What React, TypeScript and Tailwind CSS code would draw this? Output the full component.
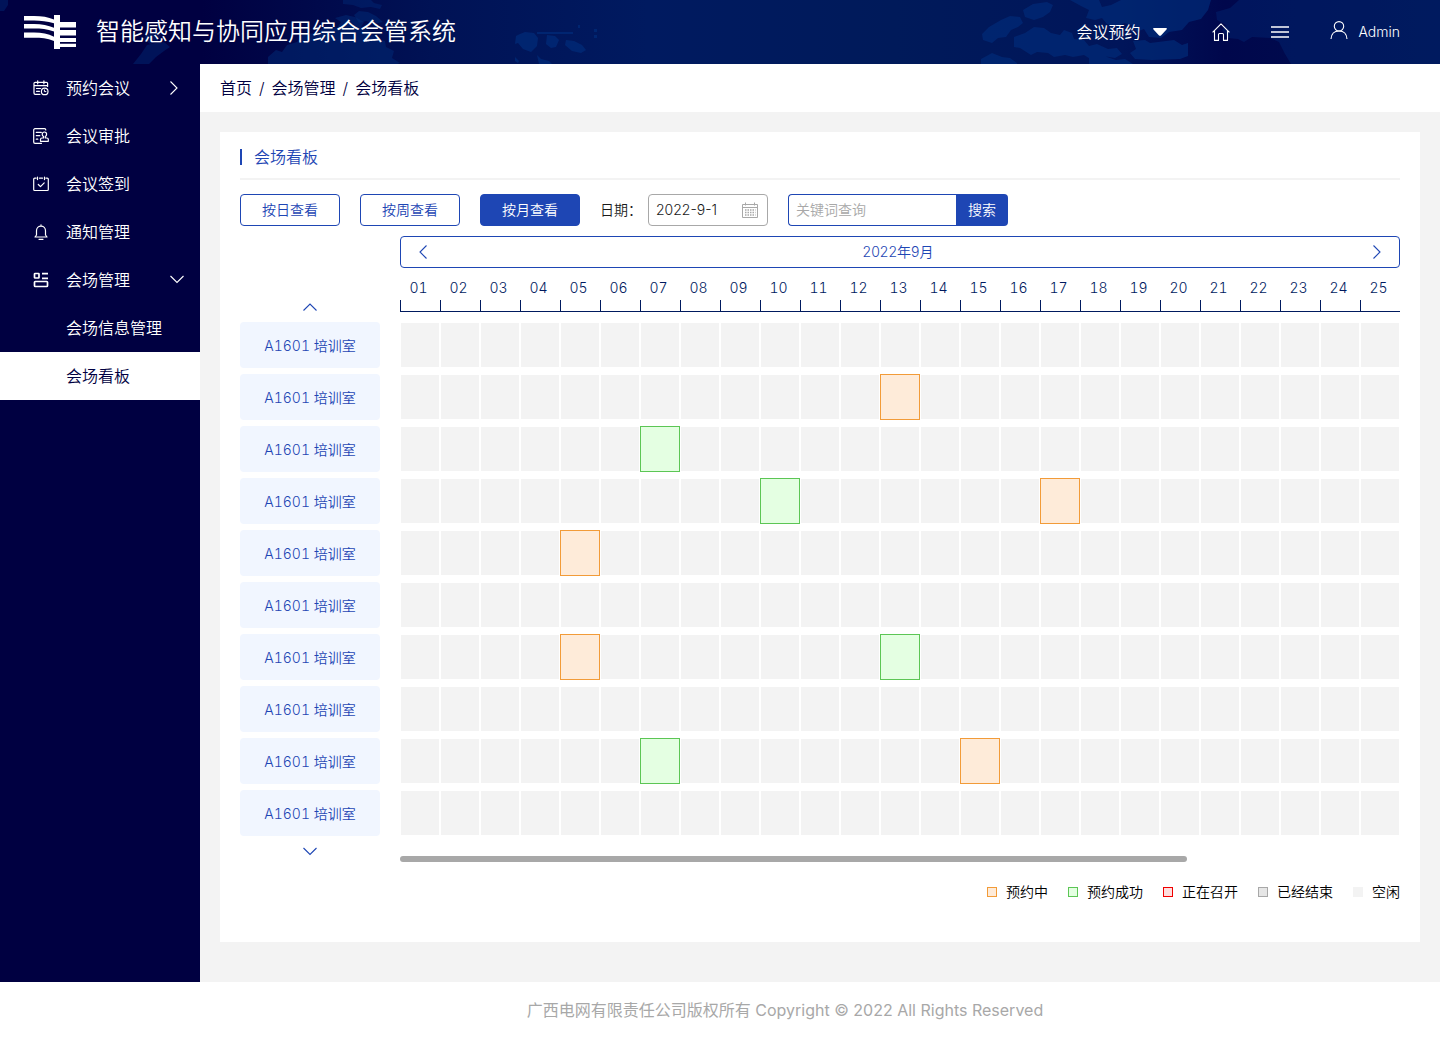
import { useState, type ReactNode } from 'react';

type Status = 'pending' | 'booked' | 'running' | 'ended' | 'free';

interface Room {
    id: number;
    name: string;
    bookings: Record<number, Status>;
}

const ROOMS: Room[] = [
    { id: 1, name: 'A1601 培训室', bookings: {} },
    { id: 2, name: 'A1601 培训室', bookings: { 13: 'pending' } },
    { id: 3, name: 'A1601 培训室', bookings: { 7: 'booked' } },
    { id: 4, name: 'A1601 培训室', bookings: { 10: 'booked', 17: 'pending' } },
    { id: 5, name: 'A1601 培训室', bookings: { 5: 'pending' } },
    { id: 6, name: 'A1601 培训室', bookings: {} },
    { id: 7, name: 'A1601 培训室', bookings: { 5: 'pending', 13: 'booked' } },
    { id: 8, name: 'A1601 培训室', bookings: {} },
    { id: 9, name: 'A1601 培训室', bookings: { 7: 'booked', 15: 'pending' } },
    { id: 10, name: 'A1601 培训室', bookings: {} },
];

const DAYS = Array.from({ length: 25 }, (_, i) => i + 1);

const CELL_STYLE: Record<Status, string> = {
    pending: 'border-[#f29b38] bg-[#feebd9]',
    booked: 'border-[#5cc655] bg-[#e4ffe2]',
    running: 'border-[#f00000] bg-[#ffdede]',
    ended: 'border-[#a8a8a8] bg-[#e6e6e6]',
    free: 'border-white bg-[#f3f3f3]',
};

const LEGEND: { status: Status; label: string }[] = [
    { status: 'pending', label: '预约中' },
    { status: 'booked', label: '预约成功' },
    { status: 'running', label: '正在召开' },
    { status: 'ended', label: '已经结束' },
    { status: 'free', label: '空闲' },
];

const VIEWS = ['按日查看', '按周查看', '按月查看'];

function Chevron({ dir }: { dir: 'left' | 'right' | 'up' | 'down' }) {
    const d = {
        left: 'M11.5 1.5 5 8l6.5 6.5',
        right: 'M4.5 1.5 11 8l-6.500 6.500',
        up: 'M1.5 11.5 8 5l6.5 6.5',
        down: 'M1.5 4 8 10.500l6.500-6.500',
    }[dir];
    return (
        <svg viewBox="0 0 16 16" className="size-4" fill="none" stroke="currentColor" strokeWidth="1.1">
            <path d={d} />
        </svg>
    );
}

function LineIcon({ children }: { children: ReactNode }) {
    return (
        <svg viewBox="0 0 16 16" className="size-4 shrink-0" fill="none" stroke="currentColor" strokeWidth="1.2" strokeLinecap="round" strokeLinejoin="round">
            {children}
        </svg>
    );
}

function BookIcon() {
    return (
        <LineIcon>
            <path d="M7 14.300H2.300A1.300 1.300 0 0 1 1 13V3.600a1.300 1.300 0 0 1 1.300-1.300h11A1.300 1.300 0 0 1 14.600 3.600V6.500M1 5.600h13.600M4.700.8v3M10.900.8v3M3.500 8.500h4M3.500 11.300h3" />
            <circle cx="11.700" cy="11.400" r="3.300" />
            <path d="M11.400 9.900v1.700h1.500" strokeWidth="1" />
        </LineIcon>
    );
}

function ApproveIcon() {
    return (
        <LineIcon>
            <path d="M8.500 15.300H2A1.300 1.300 0 0 1 .7 14V2A1.300 1.300 0 0 1 2 .7h9.500A1.300 1.300 0 0 1 12.800 2M3.300 4.400h5M3.300 7.700h3.500M3.300 11.200h1.500" />
            <path d="M10.500 10V8.600C9.600 8 9.200 7.200 9.200 6.200a2.200 2.200 0 0 1 4.400 0c0 1-.4 1.800-1.300 2.400V10h1.500a1.500 1.500 0 0 1 1.500 1.500v1.800H7.500v-1.800A1.500 1.500 0 0 1 9 10z" />
        </LineIcon>
    );
}

function SignIcon() {
    return (
        <LineIcon>
            <path d="M3 2.200H1.700a1 1 0 0 0-1 1V13.500a1 1 0 0 0 1 1h12.600a1 1 0 0 0 1-1V3.200a1 1 0 0 0-1-1H13M6.500 2.200h3M4.500 1v2.600M11.500 1v2.600M5.300 8.500l2.200 2.200 3.700-3.800" />
        </LineIcon>
    );
}

function BellIcon() {
    return (
        <LineIcon>
            <path d="M8 .8v1.300M3.500 11V6.700a4.500 4.500 0 0 1 9 0V11l1.500 2H2zM6 15.300h4" />
        </LineIcon>
    );
}

function VenueIcon() {
    return (
        <svg viewBox="0 0 16 16" className="size-4 shrink-0" fill="none" stroke="currentColor" strokeWidth="1.700">
            <rect x="1.500" y="1.500" width="4.500" height="4.500" rx=".6" />
            <rect x="1.500" y="9.500" width="13" height="5" rx=".8" />
            <path d="M9 1.700h6M9 6.300h6" />
        </svg>
    );
}

function Logo() {
    return (
        <svg viewBox="0 0 52 34" className="h-[34px] w-[52px]" fill="currentColor">
            <path d="M0 1h10c8 0 14 1 20 3.500v3.700C23 6.300 17 5.500 10 5.500H0zM0 9h10c8 0 14 1.300 20 3.800v3.600C23 14 17 13.500 10 13.500H0zM0 17.500h10c8 0 14 1.300 20 4.200V26c-7-2.700-13-3.200-20-3.200H0z" />
            <path d="M30 0h6v7h16v5.500H36v2.600h16v5.500H36V23h16v4H36v1.800h16V32H36v2h-6z" />
        </svg>
    );
}

function HeaderMap() {
    return (
        <svg viewBox="0 0 1440 64" preserveAspectRatio="xMidYMid slice" className="absolute inset-0 size-full" fill="#002b78" aria-hidden="true">
            <path d="M0 0h8v5l-4 6H0zM343 0h28l3 3 8 2-2 4-9-2-10 1-8-3-10-1zM133 64l8-10 6-9 8-2 9-1 6 5-6 4-8 6-7 7zM146 33l8-2 7 3-3 7-8 3-6-5z" opacity=".45" />
            <path d="m268 57 8-7 6 2 5-7 10-3 5-7 12-2 14-7 9 2 4-6-6-4 11-3 9 2 9 5-3 5 9 4 5 7 10 3 1 6 8 4-2 7 8 5-8 3h-9l-4 4H268z" opacity=".5" />
            <path d="M354 15l5-4 9 1 8 4 7 6-9 2-8-3-7 2z" opacity=".5" />
            <path d="m516 36 4-2 5-2 9 1 4 5-1 8-6 6-8-3-5-6-3 1zM537 32h36v2h-36zM547 35l8 1 4 4-3 7-5 1-5-4zM566 40l8 1 8 4 4 5-5 3-9-2-7-6zM578 25h2v3h-2zM594 29h3v3h-3zM594 35h3v3h-3zM515 57l4 4-1 2-3-2zM537 55l4 4 8 2 3 3h-13z" opacity=".75" />
            <path d="m982 34 7-7 12-7 9-4 10 1 3 6-5 4-7 3-5 7-8 1-6 5-9-3zM1023 10l10-6 14-2 6 3-3 7-7 5-9 3-9-3zM1070 0h29l3 7 9-2 10-5h90l-3 10-7 9-12 3-7 8-13 2-8 6-12-1-5-8-8 3-4-7-8-2-6 4-11-3-5-6-7 2-9-2 3-8-8-4zM1014 37l11-4 9-6 10 1 7 5 9 2 4-5 8 3 2 6 10 1 5 6 8-2 11 5 9-1 5 6-7 4-12-2-11 4-8-5-11 2-8-2-11 2-6-4-11-1-6 3-11-7-6-1zM1133 41l12-1 5 3 24-3 8 5 6-2v13l-8 3-28 1-17-1-5-6 6-4zM981 59l11-6 10 4 8 1 7 5v1h-36zM1089 53l8-1 10 5 9 3 9-1 8 5h-44z" opacity=".7" />
            <path d="m1216 12 14-4 9-8h201v64h-149l-6-10-6-12-9-4-18-1-8 5-6-3-10-1-6-8 4-5-9-5z" opacity=".4" />
        </svg>
    );
}

function Header() {
    return (
        <header className="relative h-16 bg-[linear-gradient(90deg,#000041_0%,#000041_14%,#001255_30%,#001a60_45%,#001a5a_62%,#00155a_78%,#00074c_85%,#00104f_100%)] text-white">
            <HeaderMap />
            <div className="relative flex h-full items-center pl-6 pr-10">
                <Logo />
                <h1 className="ml-5 text-2xl font-[350]">智能感知与协同应用综合会管系统</h1>
                <button type="button" className="ml-auto flex items-center gap-3 text-base">
                    会议预约
                    <svg viewBox="0 0 16 16" className="size-4" fill="currentColor">
                        <path d="M1.800 4h12.400q1.200.2.500 1.200l-5.500 6q-1.200 1.100-2.400 0l-5.500-6q-.7-1 .5-1.200z" />
                    </svg>
                </button>
                <button type="button" aria-label="首页" className="ml-11">
                    <svg viewBox="0 0 18 18" className="size-[18px]" fill="none" stroke="currentColor" strokeWidth="1.100" strokeLinejoin="round">
                        <path d="M.6 9.300 9 .8l8.400 8.500M2.500 7.800v9.600h4V11.500a1 1 0 0 1 1-1h3a1 1 0 0 1 1 1v5.900h4V7.800" />
                    </svg>
                </button>
                <button type="button" aria-label="菜单" className="ml-10">
                    <svg viewBox="0 0 20 18" className="h-[18px] w-5" fill="none" stroke="currentColor" strokeWidth="1.600">
                        <path d="M1 4h18M1 9h18M1 14h18" />
                    </svg>
                </button>
                <button type="button" className="ml-10 flex items-center gap-2.5 text-sm">
                    <svg viewBox="0 0 18 18" className="mb-1 size-[18px]" fill="none" stroke="currentColor" strokeWidth="1.100">
                        <circle cx="9" cy="5.300" r="4.700" />
                        <path d="M1 18c.3-4.500 3-8 8-8s7.700 3.500 8 8" />
                    </svg>
                    Admin
                </button>
            </div>
        </header>
    );
}

const MENU = [
    { label: '预约会议', icon: <BookIcon />, arrow: 'right' as const },
    { label: '会议审批', icon: <ApproveIcon /> },
    { label: '会议签到', icon: <SignIcon /> },
    { label: '通知管理', icon: <BellIcon /> },
    { label: '会场管理', icon: <VenueIcon />, arrow: 'down' as const },
];

function Sidebar() {
    return (
        <nav className="w-[200px] shrink-0 bg-[#000041] text-base text-white">
            {MENU.map((item) => (
                <a key={item.label} href="#" className="flex h-12 items-center gap-[17px] pl-[33px] pr-[15px]">
                    {item.icon}
                    <span>{item.label}</span>
                    {item.arrow && (
                        <span className={`ml-auto ${item.arrow === 'right' ? 'pr-[3px]' : ''}`}>
                            <Chevron dir={item.arrow} />
                        </span>
                    )}
                </a>
            ))}
            <a href="#" className="flex h-12 items-center pl-[66px]">会场信息管理</a>
            <a href="#" aria-current="page" className="flex h-12 items-center bg-white pl-[66px] text-[#000041]">会场看板</a>
        </nav>
    );
}

function Toolbar() {
    const [view, setView] = useState('按月查看');
    const [date, setDate] = useState('2022-9-1');
    const [keyword, setKeyword] = useState('');

    return (
        <div className="mt-3.5 flex items-center gap-5 text-sm">
            {VIEWS.map((v) => (
                <button
                    key={v}
                    type="button"
                    onClick={() => setView(v)}
                    className={`h-8 w-[100px] rounded border border-[#1e46b4] ${
                        v === view ? 'bg-[#1e46b4] text-white' : 'bg-white text-[#1e46b4]'
                    }`}
                >
                    {v}
                </button>
            ))}
            <div className="flex items-center">
                <label htmlFor="date" className="w-12 text-[#1a1a1a]">日期：</label>
                <div className="flex h-8 w-[120px] items-center rounded border border-[#a8a8a8] pl-[7px] pr-[9px]">
                    <input
                        id="date"
                        value={date}
                        onChange={(e) => setDate(e.target.value)}
                        className="min-w-0 flex-1 text-[#1a1a1a] outline-none"
                    />
                    <svg viewBox="0 0 16 16" className="size-4" fill="none" stroke="#a8a8a8">
                        <path d="M.5 2.500h15v13H.5zM.5 5.500h15M3.500.5v3M12.500.5v3" />
                        <path d="M3 8h10.500M3 10.500h10.500M3 13h10.500" strokeDasharray="1.500 1" strokeWidth="1.500" />
                    </svg>
                </div>
            </div>
            <form className="flex" onSubmit={(e) => e.preventDefault()}>
                <input
                    aria-label="关键词查询"
                    placeholder="关键词查询"
                    value={keyword}
                    onChange={(e) => setKeyword(e.target.value)}
                    className="h-8 w-[168px] rounded-l border border-r-0 border-[#1e46b4] px-[7px] pb-0.5 outline-none placeholder:text-[#a8a8a8]"
                />
                <button type="submit" className="h-8 w-[52px] rounded-r bg-[#1e46b4] text-white">搜索</button>
            </form>
        </div>
    );
}

function Board() {
    return (
        <div className="mt-2.5 text-sm tabular-nums">
            <div className="ml-40 flex h-8 items-center justify-between rounded border border-[#1e46b4] px-3.5 text-[#1e46b4]">
                <button type="button" aria-label="上个月"><Chevron dir="left" /></button>
                <span className="pr-1 proportional-nums">2022年9月</span>
                <button type="button" aria-label="下个月"><Chevron dir="right" /></button>
            </div>

            <table className="w-full table-fixed border-collapse">
                <thead>
                    <tr>
                        <td className="w-40 p-0 pr-5 align-bottom">
                            <button type="button" aria-label="向上" className="mx-auto mb-[7px] block text-[#1e46b4]">
                                <Chevron dir="up" />
                            </button>
                        </td>
                        {DAYS.map((day) => (
                            <th key={day} scope="col" className="p-0 pb-2.5 font-[350] text-[#001a5e]">
                                <div className="pb-0.5 pr-[3px] pt-2.5 leading-5">{String(day).padStart(2, '0')}</div>
                                <div className="h-3 border-b border-l border-[#001a5e]" />
                            </th>
                        ))}
                    </tr>
                </thead>
                <tbody>
                    {ROOMS.map((room) => (
                        <tr key={room.id}>
                            <th scope="row" className="p-0 pb-1.5 pr-5 font-[350]">
                                <div className="flex h-[46px] items-center justify-center rounded bg-[#f1f6ff] pt-px text-[#1e46b4]">{room.name}</div>
                            </th>
                            {DAYS.map((day) => (
                                <td key={day} className="p-0 pb-1.5">
                                    <div className={`h-[46px] border ${CELL_STYLE[room.bookings[day] ?? 'free']}`} />
                                </td>
                            ))}
                        </tr>
                    ))}
                </tbody>
            </table>

            <div className="flex items-end gap-5">
                <div className="flex w-[140px] justify-center text-[#1e46b4]">
                    <button type="button" aria-label="向下" className="h-5">
                        <Chevron dir="down" />
                    </button>
                </div>
                <div className="flex-1">
                    <div className="h-1.5 w-[78.7%] rounded-full bg-[#a8a8a8]" />
                </div>
            </div>

            <ul className="mt-5 flex justify-end gap-5 text-black">
                {LEGEND.map(({ status, label }) => (
                    <li key={status} className="flex items-center gap-[9px]">
                        <span className={`size-2.5 ${status === 'free' ? 'bg-[#f3f3f3]' : `border ${CELL_STYLE[status]}`}`} />
                        {label}
                    </li>
                ))}
            </ul>
        </div>
    );
}

export default function App() {
    return (
        <div className="flex min-h-screen flex-col bg-white font-['Inter','Noto_Sans_CJK_SC',sans-serif] font-[350]">
            <Header />
            <div className="flex flex-1">
                <Sidebar />
                <main className="flex min-w-0 flex-1 flex-col bg-[#f3f3f3]">
                    <div className="flex h-12 items-center gap-[7px] bg-white px-5 text-base text-[#000041]">
                        <a href="#">首页</a>
                        <span>/</span>
                        <a href="#">会场管理</a>
                        <span>/</span>
                        <span>会场看板</span>
                    </div>
                    <section className="m-5 mb-10 flex-1 bg-white px-5 pb-10">
                        <div className="flex h-12 items-center border-b-2 border-[#f3f3f3] pt-1">
                            <h2 className="flex items-center gap-3 text-base font-[350] text-[#1e46b4] before:h-4 before:w-0.5 before:bg-[#1e46b4]">
                                会场看板
                            </h2>
                        </div>
                        <Toolbar />
                        <Board />
                    </section>
                </main>
            </div>
            <footer className="flex h-14 items-center justify-center pl-[130px] text-base font-normal text-[#a8a8a8]">
                广西电网有限责任公司版权所有 Copyright © 2022 All Rights Reserved
            </footer>
        </div>
    );
}
